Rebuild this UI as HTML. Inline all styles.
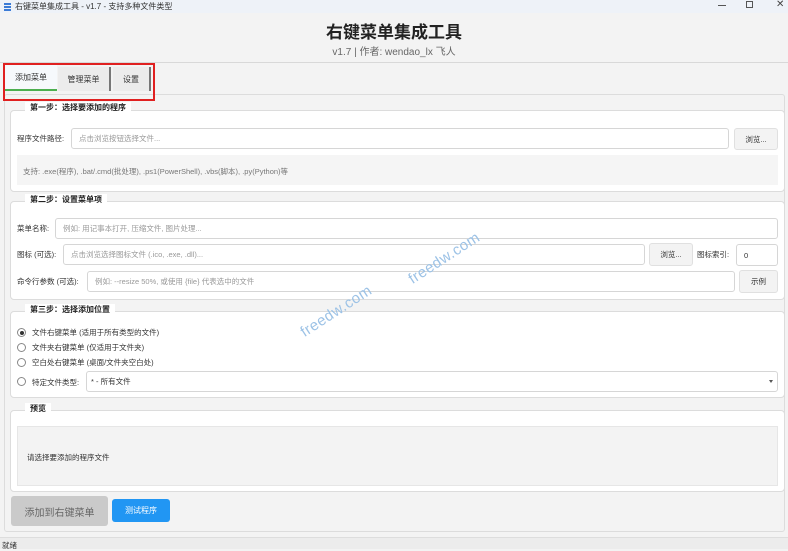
<!DOCTYPE html>
<html><head><meta charset="utf-8"><style>
*{box-sizing:border-box;margin:0;padding:0}
body{width:788px;height:549px;overflow:hidden;background:#f3f3f3;font-family:"Liberation Sans","Noto Sans CJK SC",sans-serif;font-size:8px;color:#333;position:relative}
.a{position:absolute}
.tb{left:0;top:0;width:788px;height:13px;background:#eef2f8}
.grp{position:absolute;background:#fff;border:1px solid #dcdcdc;border-radius:4px}
.gt{position:absolute;background:#fff;padding:0 5px;font-weight:bold;font-size:8px;color:#222}
.in{position:absolute;background:#fff;border:1px solid #d6d6d6;border-radius:3px;color:#999;font-size:7.5px;padding-left:7px;display:flex;align-items:center}
.bt{position:absolute;background:#f3f3f3;border:1px solid #e0e0e0;border-radius:3px;font-size:7.5px;display:flex;align-items:center;justify-content:center;color:#333}
.lb{position:absolute;font-size:7.5px;color:#333}
.rd{position:absolute;width:9px;height:9px;border:1px solid #888;border-radius:50%;background:#fff}
.wm{position:absolute;color:#9cc2e6;font-size:15px;transform:rotate(-33deg);transform-origin:left center;letter-spacing:.5px}
</style></head><body>
<div class="a tb"></div>
<div class="a" style="left:4px;top:3px;width:7px;height:1.5px;background:#3b7bd6;box-shadow:0 3px #3b7bd6,0 6px #3b7bd6"></div>
<div class="a" style="left:15px;top:1px;font-size:8px;color:#333">右键菜单集成工具 - v1.7 - 支持多种文件类型</div>
<div class="a" style="left:718px;top:5px;width:8px;height:1px;background:#555"></div>
<div class="a" style="left:746px;top:1px;width:7px;height:7px;border:1px solid #555"></div>
<div class="a" style="left:776px;top:-1px;font-size:10px;color:#444">✕</div>
<div class="a" style="left:0;width:788px;top:18px;text-align:center;font-size:17px;font-weight:bold;color:#222">右键菜单集成工具</div>
<div class="a" style="left:0;width:788px;top:43px;text-align:center;font-size:10px;color:#666">v1.7 | 作者: wendao_lx 飞人</div>
<div class="a" style="left:0;top:62px;width:788px;height:1px;background:#d8d8d8"></div>
<div class="a" style="left:5px;top:65px;width:52px;height:26px;background:#f6f9fc;border-bottom:2px solid #4caf50;font-size:8px;display:flex;align-items:center;justify-content:center">添加菜单</div>
<div class="a" style="left:58px;top:67px;width:53px;height:24px;background:#ececec;border-right:2px solid #777;font-size:8px;display:flex;align-items:center;justify-content:center">管理菜单</div>
<div class="a" style="left:113px;top:67px;width:38px;height:24px;background:#ececec;border-right:2px solid #777;font-size:8px;display:flex;align-items:center;justify-content:center">设置</div>
<div class="a" style="left:4px;top:94px;width:781px;height:438px;border:1px solid #dcdcdc;border-radius:3px"></div>
<div class="a" style="left:3px;top:63px;width:152px;height:38px;border:2px solid #e02020"></div>

<div class="grp" style="left:10px;top:110px;width:775px;height:82px"></div>
<div class="gt" style="left:25px;top:102px">第一步：选择要添加的程序</div>
<div class="lb" style="left:17px;top:133px">程序文件路径:</div>
<div class="in" style="left:71px;top:128px;width:658px;height:21px">点击浏览按钮选择文件...</div>
<div class="bt" style="left:734px;top:128px;width:44px;height:22px">浏览...</div>
<div class="a" style="left:17px;top:155px;width:761px;height:30px;background:#f5f5f5;font-size:7.5px;color:#777;padding:11px 0 0 6px">支持: .exe(程序), .bat/.cmd(批处理), .ps1(PowerShell), .vbs(脚本), .py(Python)等</div>

<div class="grp" style="left:10px;top:201px;width:775px;height:99px"></div>
<div class="gt" style="left:25px;top:194px">第二步：设置菜单项</div>
<div class="lb" style="left:17px;top:223px">菜单名称:</div>
<div class="in" style="left:55px;top:218px;width:723px;height:21px">例如: 用记事本打开, 压缩文件, 图片处理...</div>
<div class="lb" style="left:17px;top:249px">图标 (可选):</div>
<div class="in" style="left:63px;top:244px;width:582px;height:21px">点击浏览选择图标文件 (.ico, .exe, .dll)...</div>
<div class="bt" style="left:649px;top:243px;width:44px;height:23px">浏览...</div>
<div class="lb" style="left:697px;top:249px">图标索引:</div>
<div class="in" style="left:736px;top:244px;width:42px;height:22px;color:#333">0</div>
<div class="lb" style="left:17px;top:276px">命令行参数 (可选):</div>
<div class="in" style="left:87px;top:271px;width:648px;height:21px">例如: --resize 50%, 或使用 {file} 代表选中的文件</div>
<div class="bt" style="left:739px;top:270px;width:39px;height:23px">示例</div>

<div class="grp" style="left:10px;top:311px;width:775px;height:87px"></div>
<div class="gt" style="left:25px;top:304px">第三步：选择添加位置</div>
<div class="rd" style="left:17px;top:328px"></div><div class="a" style="left:20px;top:331px;width:4px;height:4px;border-radius:50%;background:#333"></div>
<div class="lb" style="left:32px;top:327px">文件右键菜单 (适用于所有类型的文件)</div>
<div class="rd" style="left:17px;top:343px"></div><div class="lb" style="left:32px;top:342px">文件夹右键菜单 (仅适用于文件夹)</div>
<div class="rd" style="left:17px;top:358px"></div><div class="lb" style="left:32px;top:357px">空白处右键菜单 (桌面/文件夹空白处)</div>
<div class="rd" style="left:17px;top:377px"></div><div class="lb" style="left:32px;top:377px">特定文件类型:</div>
<div class="in" style="left:86px;top:371px;width:692px;height:21px;color:#333;padding-left:4px">* - 所有文件</div>
<div class="a" style="left:769px;top:380px;border:2.5px solid transparent;border-top:3px solid #555"></div>

<div class="grp" style="left:10px;top:410px;width:775px;height:82px"></div>
<div class="gt" style="left:25px;top:403px">预览</div>
<div class="a" style="left:17px;top:426px;width:761px;height:60px;background:#f3f3f3;border:1px solid #e6e6e6;font-size:7.5px;color:#333;padding:25px 0 0 9px">请选择要添加的程序文件</div>

<div class="a" style="left:11px;top:496px;width:97px;height:30px;background:#cacaca;border-radius:3px;font-size:10px;color:#666;display:flex;align-items:center;justify-content:center">添加到右键菜单</div>
<div class="a" style="left:112px;top:499px;width:58px;height:23px;background:#2196f3;border-radius:3px;font-size:8px;color:#fff;display:flex;align-items:center;justify-content:center">测试程序</div>

<div class="a" style="left:0;top:537px;width:788px;height:12px;background:#ececec;border-top:1px solid #ddd;font-size:7.5px;padding:2px 0 0 2px">就绪</div>

<div class="wm" style="left:302px;top:325px">freedw.com</div>
<div class="wm" style="left:410px;top:272px">freedw.com</div>
</body></html>
